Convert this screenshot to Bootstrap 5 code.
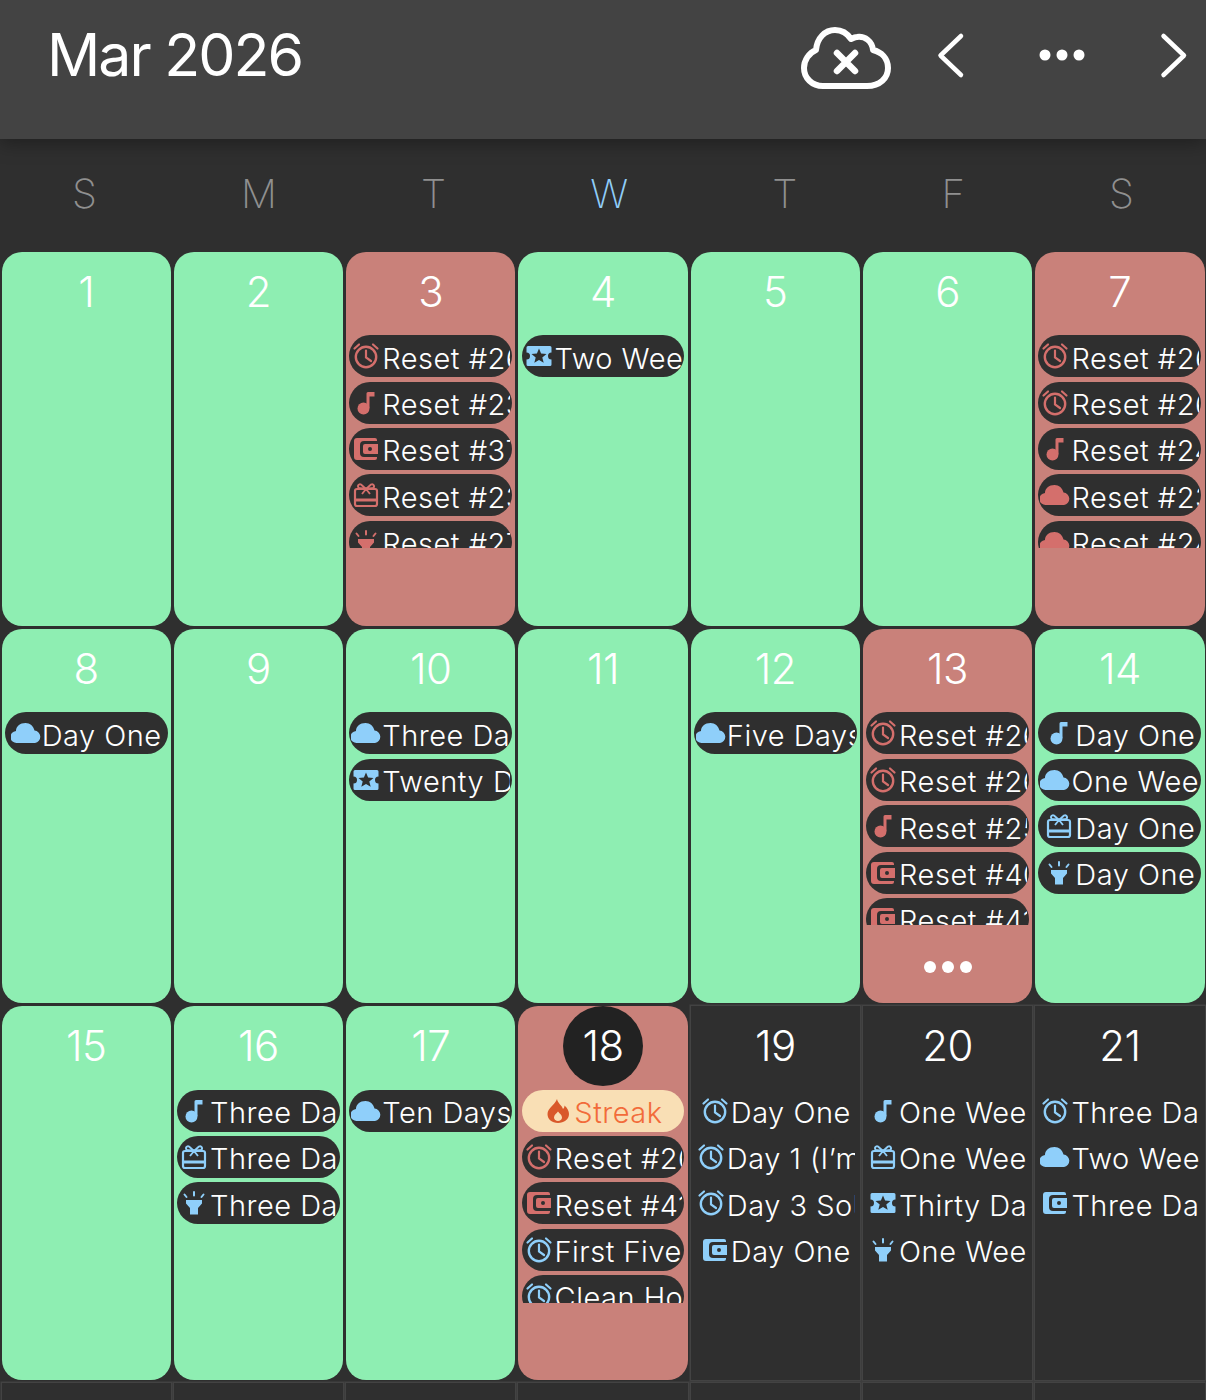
<!doctype html>
<html lang="en">
<head>
  <meta charset="utf-8">
  <meta name="viewport" content="width=device-width, initial-scale=1">
  <title>Mar 2026</title>
  <link href="https://cdn.jsdelivr.net/npm/bootstrap@5.3.0/dist/css/bootstrap.min.css" rel="stylesheet">
  <style>
    html, body { height: 1400px; overflow: hidden; }
    body { background: #2f2f2f; color: #fff; font-family: Inter, "Liberation Sans", sans-serif; font-weight: 300; }

    .cal-top { height: 139px; padding: 20px 18px 0 47px; background: #434343; box-shadow: 0 4px 18px rgba(0, 0, 0, .35); position: relative; z-index: 2; }
    .cal-title { font-size: 59px; font-weight: 400; line-height: 70px; letter-spacing: -2px; margin: 0; }
    .top-icons { gap: 71px; }
    .top-icons svg { height: 70px; display: block; fill: none; stroke: #fff; stroke-width: 4.5; stroke-linecap: round; stroke-linejoin: round; }
    .cloud-x { width: 90px; margin-right: -26px; }
    .chev { width: 30px; }
    .dots-ic { width: 50px; }

    .week-row { height: 111px; padding-top: 1px; padding-bottom: 2px; font-size: 40px; font-weight: 200; color: #909090; }
    .wk-today { color: #90cdf8; }

    .cal-grid { display: grid; grid-template-columns: repeat(7, minmax(0, 1fr)); grid-auto-rows: 377.2px; }
    .day-cell { margin: 1.5px; border-radius: 20px; overflow: hidden; min-width: 0; }
    .day-good { background: #8eeeb2; }
    .day-bad { background: #c9817a; }
    .day-future { border-radius: 0; overflow: visible; box-shadow: 0 0 0 1.5px #434343; }
    .day-num { height: 80px; font-size: 42px; font-weight: 280; line-height: 80px; text-align: center; letter-spacing: -.5px; }
    .day-now { width: 80px; height: 80px; border-radius: 50%; background: #222; margin: 0 auto; }
    .pill-box { height: 213px; margin-top: 3.8px; padding: 0 3.2px; overflow: hidden; display: flex; flex-direction: column; gap: 4.4px; }
    .evt { flex: 0 0 42px; height: 42px; border-radius: 21px; background: #2f2f2f; padding: 0 2px; display: flex; align-items: center; justify-content: center; overflow: hidden; font-size: 29px; font-weight: 280; letter-spacing: .5px; white-space: nowrap; color: #fff; }
    .evt span { padding-top: 4px; min-width: 0; overflow: hidden; }
    .day-future .evt { background: none; }
    .evt svg { flex: 0 0 30px; width: 30px; height: 30px; margin-right: 1px; }
    .evt { --ic: #8fcffa; }
    .evt.red { --ic: #d46f6c; }
    .evt svg { color: var(--ic); }
    .evt-streak { background: #f9dfb5; color: #f26b3a; --ic: #d9582a; }
    .more-dots { gap: 6px; margin-top: 36px; }
    .more-dots i { width: 12px; height: 12px; border-radius: 50%; background: #fff; display: block; }
  </style>
</head>

<body>
  <svg width="0" height="0" class="position-absolute">
    <symbol id="i-alarm" viewBox="0 0 30 30">
      <circle cx="15" cy="16" r="10.2" fill="none" stroke="currentColor" stroke-width="2.4"/>
      <path d="M15 9.5V16.5L20 20M3.5 7.5L8 3.5M26.5 7.5L22 3.5" fill="none" stroke="currentColor" stroke-width="2.2" stroke-linecap="round"/>
    </symbol>
    <symbol id="i-music" viewBox="0 0 30 30">
      <circle cx="12.5" cy="20.5" r="6" fill="currentColor"/>
      <path d="M15.500 20V5.500A1.500 1.500 0 0 1 17 4H23.500V8.500H18.500V20Z" fill="currentColor"/>
    </symbol>
    <symbol id="i-wallet" viewBox="0 0 30 30">
      <path fill-rule="evenodd" d="M6 4H24A2 2 0 0 1 26 6V7H13A4 4 0 0 0 9 11V19A4 4 0 0 0 13 23H26V24A2 2 0 0 1 24 26H6A3 3 0 0 1 3 23V7A3 3 0 0 1 6 4ZM14 10H27V20H14A2 2 0 0 1 12 18V12A2 2 0 0 1 14 10ZM19 13A2 2 0 1 0 19 17A2 2 0 1 0 19 13Z" fill="currentColor"/>
    </symbol>
    <symbol id="i-gift" viewBox="0 0 30 30">
      <rect x="4" y="9" width="22" height="17" rx="2" fill="none" stroke="currentColor" stroke-width="2.2"/>
      <path d="M4 18.5H26V21.5H4Z" fill="currentColor"/>
      <path d="M15 9L10 4.5A2 2 0 0 0 8 8L15 9L22 8A2 2 0 0 0 20 4.5L15 9M15 9L11 14M15 9L19 14" fill="none" stroke="currentColor" stroke-width="1.9" stroke-linejoin="round"/>
    </symbol>
    <symbol id="i-lamp" viewBox="0 0 30 30">
      <path d="M7 12H23V15.5L19 20V26.5H11V20L7 15.5Z" fill="currentColor"/>
      <path d="M15 4V7.5M5.5 6.5L7.5 9M24.5 6.5L22.5 9" fill="none" stroke="currentColor" stroke-width="2" stroke-linecap="round"/>
    </symbol>
    <symbol id="i-cloud" viewBox="0 0 30 30">
      <path d="M6 25A6 6 0 0 1 5 13C5 8.500 9 5 14.500 5C19 5 22.500 8 23.500 12.500A6.300 6.300 0 0 1 24 25Z" fill="currentColor"/>
    </symbol>
    <symbol id="i-ticket" viewBox="0 0 30 30">
      <path d="M4 5H26A1.500 1.500 0 0 1 27.500 6.500V11.500A3.500 3.500 0 0 0 27.500 18.500V23.500A1.500 1.500 0 0 1 26 25H4A1.500 1.500 0 0 1 2.500 23.500V18.500A3.500 3.500 0 0 0 2.500 11.500V6.500A1.500 1.500 0 0 1 4 5Z" fill="currentColor"/>
      <path d="M15 7.500L17.100 12.600L22.500 13L18.300 16.500L19.700 21.800L15 18.900L10.300 21.800L11.700 16.500L7.500 13L12.900 12.600Z" fill="#2f2f2f"/>
    </symbol>
    <symbol id="i-flame" viewBox="0 0 30 30">
      <path fill-rule="evenodd" d="M14 3C15 8 19 9 20 13C21 12 21.500 11 21.500 9.500C24.500 12 26 15.500 26 18C26 23.500 21 27 15 27C9 27 4.500 23.500 4.500 18C4.500 12 12 9 14 3ZM15 15.500C13.500 17.500 11 19 11 21.500C11 23.500 13 25 15 25C17 25 19 23.500 19 21.500C19 19 16.500 17.500 15 15.500Z" fill="currentColor"/>
    </symbol>
  </svg>

  <header class="cal-top d-flex align-items-start">
    <h1 class="cal-title">Mar 2026</h1>
    <div class="top-icons d-flex ms-auto">
      <svg class="cloud-x" viewBox="0 0 90 70">
        <path stroke-width="6" d="M22 66H66C79 66 87 58 87 48C87 38 80 32 72 30C71 21 64 16 56 17C54 17 52 18 50 19C46 13 40 10 34 10C24 10 16 18 15 30C8 33 3 40 3 48C3 58 11 66 22 66Z"/>
        <path d="M36 33L54 51M54 33L36 51" stroke-width="6.500"/>
      </svg>
      <svg class="chev" viewBox="0 0 30 70"><path d="M25 16L4.500 35.500L25 55"/></svg>
      <svg class="dots-ic" viewBox="0 0 50 70"><g fill="#fff" stroke="none"><circle cx="8" cy="35" r="5.500"/><circle cx="25" cy="35" r="5.500"/><circle cx="42" cy="35" r="5.500"/></g></svg>
      <svg class="chev" viewBox="0 0 30 70"><path d="M5.500 16L26 35.500L5.500 55"/></svg>
    </div>
  </header>

  <div class="week-row d-flex justify-content-around align-items-center">
    <span>S</span><span>M</span><span>T</span><span class="wk-today">W</span><span>T</span><span>F</span><span>S</span>
  </div>

  <main class="cal-grid">
    <!-- week 1 -->
    <div class="day-cell day-good"><div class="day-num">1</div></div>
    <div class="day-cell day-good"><div class="day-num">2</div></div>
    <div class="day-cell day-bad">
      <div class="day-num">3</div>
      <div class="pill-box">
        <div class="evt red"><svg><use href="#i-alarm"/></svg><span>Reset #26 Days</span></div>
        <div class="evt red"><svg><use href="#i-music"/></svg><span>Reset #23 Days</span></div>
        <div class="evt red"><svg><use href="#i-wallet"/></svg><span>Reset #37 Days</span></div>
        <div class="evt red"><svg><use href="#i-gift"/></svg><span>Reset #23 Days</span></div>
        <div class="evt red"><svg><use href="#i-lamp"/></svg><span>Reset #27 Days</span></div>
      </div>
    </div>
    <div class="day-cell day-good">
      <div class="day-num">4</div>
      <div class="pill-box">
        <div class="evt"><svg><use href="#i-ticket"/></svg><span>Two Weeks</span></div>
      </div>
    </div>
    <div class="day-cell day-good"><div class="day-num">5</div></div>
    <div class="day-cell day-good"><div class="day-num">6</div></div>
    <div class="day-cell day-bad">
      <div class="day-num">7</div>
      <div class="pill-box">
        <div class="evt red"><svg><use href="#i-alarm"/></svg><span>Reset #26 Days</span></div>
        <div class="evt red"><svg><use href="#i-alarm"/></svg><span>Reset #26 Days</span></div>
        <div class="evt red"><svg><use href="#i-music"/></svg><span>Reset #24 Days</span></div>
        <div class="evt red"><svg><use href="#i-cloud"/></svg><span>Reset #23 Days</span></div>
        <div class="evt red"><svg><use href="#i-cloud"/></svg><span>Reset #24 Days</span></div>
      </div>
    </div>

    <!-- week 2 -->
    <div class="day-cell day-good">
      <div class="day-num">8</div>
      <div class="pill-box">
        <div class="evt"><svg><use href="#i-cloud"/></svg><span>Day One</span></div>
      </div>
    </div>
    <div class="day-cell day-good"><div class="day-num">9</div></div>
    <div class="day-cell day-good">
      <div class="day-num">10</div>
      <div class="pill-box">
        <div class="evt"><svg><use href="#i-cloud"/></svg><span>Three Days</span></div>
        <div class="evt"><svg><use href="#i-ticket"/></svg><span>Twenty Days</span></div>
      </div>
    </div>
    <div class="day-cell day-good"><div class="day-num">11</div></div>
    <div class="day-cell day-good">
      <div class="day-num">12</div>
      <div class="pill-box">
        <div class="evt"><svg><use href="#i-cloud"/></svg><span>Five Days</span></div>
      </div>
    </div>
    <div class="day-cell day-bad">
      <div class="day-num">13</div>
      <div class="pill-box">
        <div class="evt red"><svg><use href="#i-alarm"/></svg><span>Reset #26 Days</span></div>
        <div class="evt red"><svg><use href="#i-alarm"/></svg><span>Reset #26 Days</span></div>
        <div class="evt red"><svg><use href="#i-music"/></svg><span>Reset #25 Days</span></div>
        <div class="evt red"><svg><use href="#i-wallet"/></svg><span>Reset #40 Days</span></div>
        <div class="evt red"><svg><use href="#i-wallet"/></svg><span>Reset #41 Days</span></div>
      </div>
      <div class="more-dots d-flex justify-content-center"><i></i><i></i><i></i></div>
    </div>
    <div class="day-cell day-good">
      <div class="day-num">14</div>
      <div class="pill-box">
        <div class="evt"><svg><use href="#i-music"/></svg><span>Day One</span></div>
        <div class="evt"><svg><use href="#i-cloud"/></svg><span>One Week</span></div>
        <div class="evt"><svg><use href="#i-gift"/></svg><span>Day One</span></div>
        <div class="evt"><svg><use href="#i-lamp"/></svg><span>Day One</span></div>
      </div>
    </div>

    <!-- week 3 -->
    <div class="day-cell day-good"><div class="day-num">15</div></div>
    <div class="day-cell day-good">
      <div class="day-num">16</div>
      <div class="pill-box">
        <div class="evt"><svg><use href="#i-music"/></svg><span>Three Days</span></div>
        <div class="evt"><svg><use href="#i-gift"/></svg><span>Three Days</span></div>
        <div class="evt"><svg><use href="#i-lamp"/></svg><span>Three Days</span></div>
      </div>
    </div>
    <div class="day-cell day-good">
      <div class="day-num">17</div>
      <div class="pill-box">
        <div class="evt"><svg><use href="#i-cloud"/></svg><span>Ten Days</span></div>
      </div>
    </div>
    <div class="day-cell day-bad">
      <div class="day-num day-now">18</div>
      <div class="pill-box">
        <div class="evt evt-streak"><svg><use href="#i-flame"/></svg><span>Streak</span></div>
        <div class="evt red"><svg><use href="#i-alarm"/></svg><span>Reset #26 Days</span></div>
        <div class="evt red"><svg><use href="#i-wallet"/></svg><span>Reset #41 Days</span></div>
        <div class="evt"><svg><use href="#i-alarm"/></svg><span>First Five Days</span></div>
        <div class="evt"><svg><use href="#i-alarm"/></svg><span>Clean Home</span></div>
      </div>
    </div>
    <div class="day-cell day-future">
      <div class="day-num">19</div>
      <div class="pill-box">
        <div class="evt"><svg><use href="#i-alarm"/></svg><span>Day One</span></div>
        <div class="evt"><svg><use href="#i-alarm"/></svg><span>Day 1 (I’m Back)</span></div>
        <div class="evt"><svg><use href="#i-alarm"/></svg><span>Day 3 Sober</span></div>
        <div class="evt"><svg><use href="#i-wallet"/></svg><span>Day One</span></div>
      </div>
    </div>
    <div class="day-cell day-future">
      <div class="day-num">20</div>
      <div class="pill-box">
        <div class="evt"><svg><use href="#i-music"/></svg><span>One Week</span></div>
        <div class="evt"><svg><use href="#i-gift"/></svg><span>One Week</span></div>
        <div class="evt"><svg><use href="#i-ticket"/></svg><span>Thirty Days</span></div>
        <div class="evt"><svg><use href="#i-lamp"/></svg><span>One Week</span></div>
      </div>
    </div>
    <div class="day-cell day-future">
      <div class="day-num">21</div>
      <div class="pill-box">
        <div class="evt"><svg><use href="#i-alarm"/></svg><span>Three Days</span></div>
        <div class="evt"><svg><use href="#i-cloud"/></svg><span>Two Weeks</span></div>
        <div class="evt"><svg><use href="#i-wallet"/></svg><span>Three Days</span></div>
      </div>
    </div>

    <!-- week 4, only its top edge is on screen -->
    <div class="day-cell day-future"></div>
    <div class="day-cell day-future"></div>
    <div class="day-cell day-future"></div>
    <div class="day-cell day-future"></div>
    <div class="day-cell day-future"></div>
    <div class="day-cell day-future"></div>
    <div class="day-cell day-future"></div>
  </main>

  <script src="https://cdn.jsdelivr.net/npm/bootstrap@5.3.0/dist/js/bootstrap.bundle.min.js"></script>
</body>
</html>
